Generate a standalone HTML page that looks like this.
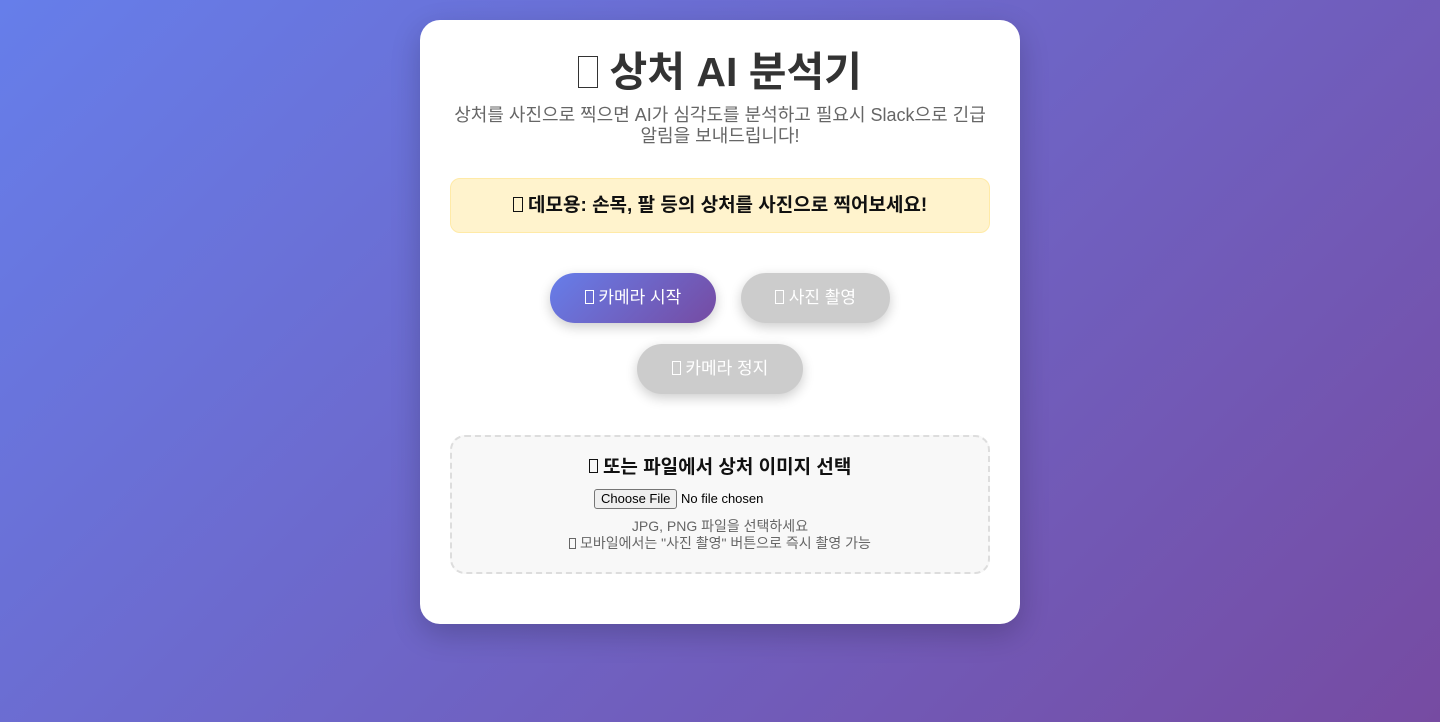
<!DOCTYPE html>
<html><head><meta charset="utf-8"><style>
*{box-sizing:border-box;margin:0;padding:0}
body{width:1440px;height:722px;overflow:hidden;background:linear-gradient(135deg,#667eea 0%,#764ba2 100%);font-family:"Liberation Sans","Noto Sans CJK KR",sans-serif;}
.card{position:absolute;left:420px;top:20px;width:600px;height:604px;background:#fff;border-radius:20px;box-shadow:0 10px 30px rgba(0,0,0,.2);padding:0 30px;text-align:center}
.t{position:absolute;left:0;width:600px;text-align:center}
.tofu{display:inline-block;border:1.5px solid currentColor;vertical-align:middle}
.sub{top:85px;font-size:18px;color:#666;line-height:21px;padding:0 30px}
.alert{position:absolute;left:30px;top:158px;width:540px;height:55px;background:#fff3cd;border:1px solid #ffeaa7;border-radius:10px;font-size:19px;font-weight:bold;color:#111;line-height:53px}
.btn{position:absolute;height:50px;border-radius:25px;color:#fff;font-size:17px;line-height:50px;text-align:center;box-shadow:0 4px 12px rgba(0,0,0,.2)}
.up{position:absolute;left:30px;top:415px;width:540px;height:139px;background:#f8f8f8;border:2px dashed #ddd;border-radius:15px}
</style></head><body>
<div class="card">
<div class="t" style="top:26px;font-size:41px;font-weight:bold;color:#333;line-height:52px"><span class="tofu" style="width:20px;height:32px;margin-top:-6px"></span> 상처 AI 분석기</div>
<div class="t sub">상처를 사진으로 찍으면 AI가 심각도를 분석하고 필요시 Slack으로 긴급 알림을 보내드립니다!</div>
<div class="alert"><span class="tofu" style="width:10px;height:15px;margin-top:-3px"></span> 데모용: 손목, 팔 등의 상처를 사진으로 찍어보세요!</div>
<div class="btn" style="left:130px;top:253px;width:166px;background:linear-gradient(135deg,#667eea,#764ba2)"><span class="tofu" style="width:9px;height:14px;margin-top:-3px"></span> 카메라 시작</div>
<div class="btn" style="left:321px;top:253px;width:149px;background:#ccc"><span class="tofu" style="width:9px;height:14px;margin-top:-3px"></span> 사진 촬영</div>
<div class="btn" style="left:217px;top:324px;width:166px;background:#ccc"><span class="tofu" style="width:9px;height:14px;margin-top:-3px"></span> 카메라 정지</div>
<div class="up">
<div style="position:absolute;left:0;width:536px;top:19px;font-size:19px;font-weight:bold;color:#111;line-height:24px"><span class="tofu" style="width:9px;height:14px;margin-top:-3px"></span> 또는 파일에서 상처 이미지 선택</div>
<div style="position:absolute;left:142px;top:52px;font-size:13px;color:#000;line-height:20px;text-align:left"><span style="display:inline-block;border:1px solid #767676;background:#efefef;border-radius:3px;padding:1px 6px;line-height:16px">Choose File</span> No file chosen</div>
<div style="position:absolute;left:0;width:536px;top:81px;font-size:14px;color:#666;line-height:17px">JPG, PNG 파일을 선택하세요<br><span class="tofu" style="width:7px;height:11px;border-width:1px;margin-top:-2px"></span> 모바일에서는 "사진 촬영" 버튼으로 즉시 촬영 가능</div>
</div>
</div>
</body></html>
